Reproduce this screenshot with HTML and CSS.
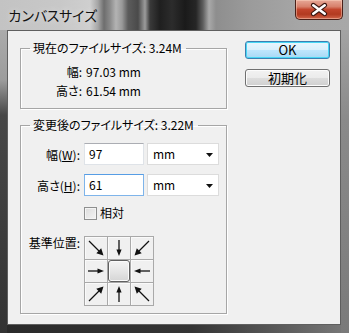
FILE: index.html
```html
<!DOCTYPE html>
<html lang="ja">
<head>
<meta charset="utf-8">
<title>カンバスサイズ</title>
<link rel="stylesheet" href="styles.css">
</head>
<body>
<div class="window">
  <div class="titlebar">
    <span class="title">カンバスサイズ</span>
    <div class="close">
      <svg width="48" height="20" viewBox="0 0 48 20">
        <path d="M18 5 L30 14 M30 5 L18 14" stroke="#3a1610" stroke-width="5" stroke-linecap="round" fill="none"/>
        <path d="M18 5 L30 14 M30 5 L18 14" stroke="#ffffff" stroke-width="2.6" stroke-linecap="round" fill="none"/>
      </svg>
    </div>
  </div>
  <div class="client">
    <div class="main">
      <fieldset class="group g1">
        <legend>現在のファイルサイズ: 3.24M</legend>
        <div class="info">
          <span class="lbl">幅:</span><span class="val">97.03 mm</span>
          <span class="lbl">高さ:</span><span class="val">61.54 mm</span>
        </div>
      </fieldset>
      <fieldset class="group g2">
        <legend>変更後のファイルサイズ: 3.22M</legend>
        <div class="form">
          <div class="row">
            <span class="lbl">幅(<u>W</u>):</span>
            <div class="input">97</div>
            <div class="select"><span>mm</span><svg width="7" height="4" viewBox="0 0 7 4"><path d="M0 0 H7 L3.5 4 Z" fill="#111"/></svg></div>
          </div>
          <div class="row">
            <span class="lbl">高さ(<u>H</u>):</span>
            <div class="input focus">61</div>
            <div class="select"><span>mm</span><svg width="7" height="4" viewBox="0 0 7 4"><path d="M0 0 H7 L3.5 4 Z" fill="#111"/></svg></div>
          </div>
          <div class="row check">
            <span class="lbl"></span>
            <span class="box"></span><span class="checklabel">相対</span>
          </div>
          <div class="row anchor">
            <span class="lbl">基準位置:</span>
            <div class="grid">
              <div class="cell"><svg width="22" height="22" viewBox="0 0 22 22"><g><path d="M4 4 L14 14" stroke="#111" stroke-width="1.3"/><path d="M18.5 18.5 L11.3 16.2 L16.2 11.3 Z" fill="#111"/></g></svg></div>
              <div class="cell"><svg width="22" height="22" viewBox="0 0 22 22"><g transform="rotate(90 11 11)"><path d="M3 11 H14" stroke="#111" stroke-width="1.3"/><path d="M19 11 L12.5 8.4 L12.5 13.6 Z" fill="#111"/></g></svg></div>
              <div class="cell"><svg width="22" height="22" viewBox="0 0 22 22"><g transform="rotate(90 11 11)"><path d="M4 4 L14 14" stroke="#111" stroke-width="1.3"/><path d="M18.5 18.5 L11.3 16.2 L16.2 11.3 Z" fill="#111"/></g></svg></div>
              <div class="cell"><svg width="22" height="22" viewBox="0 0 22 22"><g><path d="M3 11 H14" stroke="#111" stroke-width="1.3"/><path d="M19 11 L12.5 8.4 L12.5 13.6 Z" fill="#111"/></g></svg></div>
              <div class="cell center"><span class="knob"></span></div>
              <div class="cell"><svg width="22" height="22" viewBox="0 0 22 22"><g transform="rotate(180 11 11)"><path d="M3 11 H14" stroke="#111" stroke-width="1.3"/><path d="M19 11 L12.5 8.4 L12.5 13.6 Z" fill="#111"/></g></svg></div>
              <div class="cell"><svg width="22" height="22" viewBox="0 0 22 22"><g transform="rotate(270 11 11)"><path d="M4 4 L14 14" stroke="#111" stroke-width="1.3"/><path d="M18.5 18.5 L11.3 16.2 L16.2 11.3 Z" fill="#111"/></g></svg></div>
              <div class="cell"><svg width="22" height="22" viewBox="0 0 22 22"><g transform="rotate(270 11 11)"><path d="M3 11 H14" stroke="#111" stroke-width="1.3"/><path d="M19 11 L12.5 8.4 L12.5 13.6 Z" fill="#111"/></g></svg></div>
              <div class="cell"><svg width="22" height="22" viewBox="0 0 22 22"><g transform="rotate(180 11 11)"><path d="M4 4 L14 14" stroke="#111" stroke-width="1.3"/><path d="M18.5 18.5 L11.3 16.2 L16.2 11.3 Z" fill="#111"/></g></svg></div>
            </div>
          </div>
        </div>
      </fieldset>
    </div>
    <div class="side">
      <button class="btn default">OK</button>
      <button class="btn">初期化</button>
    </div>
  </div>
</div>
</body>
</html>
```

FILE: styles.css
```css
html, body {
  margin: 0;
  padding: 0;
}
body {
  width: 349px;
  height: 333px;
  overflow: hidden;
  font-family: "Noto Sans CJK JP", "Noto Sans", sans-serif;
  font-size: 12px;
  color: #000;
  background: #2d2d2d;
}
.window {
  width: 349px;
  height: 333px;
  display: flex;
  flex-direction: column;
  background:
    linear-gradient(to bottom, #b4b4b4 0, #9c9c9c 80px, #474747 115px, #333 100%) left top / 7px 100% no-repeat,
    linear-gradient(to bottom, #ababab 0, #8a8a8a 120px, #7a7a7a 100%) right top / 8px 100% no-repeat,
    linear-gradient(to right, #2a2a2a 0, #343434 55%, #5a5a5a 80%, #7a7a7a 100%);
}
.titlebar {
  height: 30px;
  flex: none;
  display: flex;
  align-items: flex-start;
  background: linear-gradient(to right,
    #c3c3c3 0, #c8c8c8 60px, #cfcfcf 90px, #a5a5a5 98px, #6e6e6e 104px, #8a8a8a 110px,
    #b3b3b3 116px, #9a9a9a 122px, #5c5c5c 128px, #4a4a4a 138px, #9c9c9c 145px,
    #3a3a3a 150px, #1f1f1f 160px, #2c2c2c 172px, #1a1a1a 185px, #262626 196px,
    #5e5e5e 203px, #a9a9a9 209px, #8e8e8e 216px, #9b9b9b 250px, #a6a6a6 300px, #a8a8a8 349px);
}
.title {
  margin: 6px 0 0 8px;
  font-size: 14px;
  line-height: 18px;
  letter-spacing: -1.3px;
  color: #111;
  text-shadow: 0 0 6px rgba(255,255,255,0.6);
}
.close {
  margin-left: auto;
  margin-right: 6px;
  width: 48px;
  height: 20px;
  box-sizing: border-box;
  border: 1px solid #4a2018;
  border-top: none;
  border-radius: 0 0 5px 5px;
  background: linear-gradient(to bottom, #e7a897 0, #d7806b 35%, #c2452c 50%, #b23a20 75%, #d0654a 100%);
  box-shadow: inset 0 0 0 1px rgba(255,220,200,0.45);
  display: flex;
}
.close svg { display: block; }
.client {
  flex: 1;
  margin: 0 8px 8px 7px;
  background: #f0f0f0;
  border: 1px solid #5f5f5f;
  display: flex;
}
.main {
  width: 207px;
  padding: 10px 0 0 12px;
}
.group {
  margin: 0;
  padding: 0;
  min-width: 0;
  width: 207px;
  box-sizing: border-box;
  border: 1px solid #a6a6a6;
  box-shadow: 1px 1px 0 #ffffff, inset 1px 1px 0 #ffffff;
}
.group legend {
  margin-left: 9px;
  padding: 0 4px 0 3px;
  line-height: 14px;
  font-feature-settings: "palt";
}
.g2 { margin-top: 9px; }
.info {
  display: grid;
  grid-template-columns: 61px auto;
  column-gap: 4px;
  padding: 7px 0 8px;
  line-height: 19px;
}
.lbl {
  text-align: right;
  font-feature-settings: "palt";
}
.form {
  padding: 11px 0 7px;
}
.row {
  display: flex;
  align-items: center;
}
.row .lbl {
  width: 59px;
  margin-right: 4px;
  flex: none;
}
.row + .row { margin-top: 9px; }
.row.check { margin-top: 10px; }
.row.anchor { margin-top: 16px; align-items: flex-start; }
.row.anchor .lbl { line-height: 14px; text-align: right; }
.input {
  width: 60px;
  height: 22px;
  box-sizing: border-box;
  background: #fff;
  border: 1px solid #dfe3e8;
  border-top-color: #abadb3;
  padding-left: 4px;
  line-height: 20px;
}
.input.focus {
  border-color: #7eb4ea;
  border-top-color: #569de5;
}
.select {
  margin-left: 3px;
  width: 72px;
  height: 22px;
  box-sizing: border-box;
  background: #fff;
  border: 1px solid #dcdcdc;
  padding: 0 5px 0 5px;
  display: flex;
  align-items: center;
  justify-content: space-between;
  line-height: 20px;
}
.select svg { display: block; margin-top: 1px; }
.box {
  width: 13px;
  height: 13px;
  box-sizing: border-box;
  border: 1px solid #8e8f8f;
  background: linear-gradient(135deg, #dcdcdc 0, #f4f4f4 100%);
  box-shadow: inset 0 0 0 1px #f4f4f4;
}
.checklabel {
  margin-left: 3px;
  line-height: 14px;
}
.grid {
  display: grid;
  grid-template-columns: repeat(3, 22px);
  grid-template-rows: repeat(3, 22px);
  gap: 1px;
  padding: 1px;
  background: #a9a9a9;
}
.cell {
  background: #f0f0f0;
  box-shadow: inset 1px 1px 0 #fafafa;
}
.cell svg { display: block; }
.cell.center {
  display: flex;
  background: #f0f0f0;
}
.knob {
  flex: 1;
  margin: 0;
  border: 1px solid #606060;
  border-radius: 3px;
  background: linear-gradient(to bottom, #f4f4f4 0, #e6e6e6 50%, #d5d5d5 100%);
  box-shadow: inset 0 0 0 1px #fbfbfb;
}
.side {
  padding: 10px 0 0 18px;
  display: flex;
  flex-direction: column;
  gap: 10px;
}
.btn {
  width: 85px;
  height: 18px;
  padding: 0;
  margin: 0;
  font-family: "Noto Sans CJK JP", "Noto Sans", sans-serif;
  font-size: 13px;
  line-height: 16px;
  color: #000;
  border: 1px solid #707070;
  border-radius: 3px;
  background: linear-gradient(to bottom, #f2f2f2 0, #ebebeb 50%, #dddddd 51%, #cfcfcf 100%);
  box-shadow: inset 0 0 0 1px #fcfcfc;
}
.btn.default {
  border-color: #3c7fb1;
  background: linear-gradient(to bottom, #eaf6fd 0, #d9f0fc 50%, #bee6fd 51%, #a7d9f5 100%);
  box-shadow: inset 0 0 0 1px #48d7f4;
}
```
